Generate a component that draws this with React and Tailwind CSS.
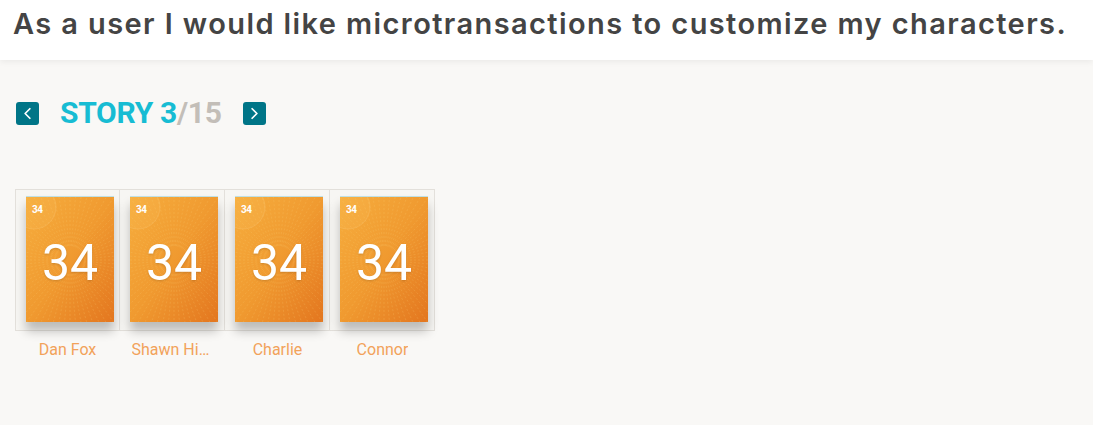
import { ChevronLeft, ChevronRight } from "lucide-react";

const players = ["Dan Fox", "Shawn Hinsey", "Charlie", "Connor"];

const rays = Array.from({ length: 72 }, (_, i) => {
  const a = (i / 72) * Math.PI * 2;
  return {
    x1: 44 + Math.cos(a) * 14,
    y1: 63 + Math.sin(a) * 14,
    x2: 44 + Math.cos(a) * 90,
    y2: 63 + Math.sin(a) * 90,
  };
});

const Card = ({ value }) => (
  <div className="relative w-[88px] h-[126px] border-t border-[#bfe0e4] bg-gradient-to-br from-[#f6ad3d] via-[#f09a30] to-[#e3761f] shadow-[0_9px_10px_rgba(0,0,0,0.24)] overflow-hidden">
    <svg className="absolute inset-0" width="88" height="126" viewBox="0 0 88 126">
      {rays.map((r, i) => (
        <line
          key={i}
          x1={r.x1}
          y1={r.y1}
          x2={r.x2}
          y2={r.y2}
          stroke="#fbd27a"
          strokeOpacity="0.25"
          strokeWidth="0.8"
          strokeDasharray="2 2"
        />
      ))}
      <circle cx="8" cy="10" r="22" fill="#ffd070" fillOpacity="0.12" stroke="#ffe0a0" strokeOpacity="0.3" strokeWidth="0.6" />
    </svg>
    <span className="absolute left-[6px] top-[8px] text-[10px] font-bold text-white leading-none tracking-[-0.5px]">
      {value}
    </span>
    <div className="absolute inset-0 flex items-center justify-center pt-[6px]">
      <span className="text-[50px] text-white leading-none drop-shadow-[0_1px_1px_rgba(0,0,0,0.15)]">
        {value}
      </span>
    </div>
  </div>
);

export default function App() {
  return (
    <div className="min-h-[425px] bg-[#f9f8f6] font-['Roboto',sans-serif]">
      <header className="h-[60px] bg-white shadow-[0_2px_6px_rgba(0,0,0,0.06)] px-[13px] flex items-center">
        <h1 className="text-[29px] font-semibold text-[#444444] font-['Inter',sans-serif] tracking-[1.4px] leading-none -mt-[14px] whitespace-nowrap">
          As a user I would like microtransactions to customize my characters.
        </h1>
      </header>

      <div className="pl-[16px] pt-[38px] flex items-center">
        <button className="w-[23px] h-[23px] rounded-[3px] bg-[#007587] flex items-center justify-center text-white">
          <ChevronLeft size={19} strokeWidth={2.2} />
        </button>
        <div className="ml-[21px] text-[30px] font-bold leading-none tracking-[-0.3px]">
          <span className="text-[#17bcd3]">STORY 3</span>
          <span className="text-[#c3beb8]">/15</span>
        </div>
        <button className="ml-[21px] w-[23px] h-[23px] rounded-[3px] bg-[#007587] flex items-center justify-center text-white">
          <ChevronRight size={19} strokeWidth={2.2} />
        </button>
      </div>

      <div className="pl-[15px] pt-[61px] flex">
        {players.map((name, i) => (
          <div key={name} className="w-[105px] flex flex-col items-center">
            <div
              className={`w-full h-[142px] border border-[#e3e0db] bg-[#f7f6f3] flex justify-start pl-[10px] pt-[6px] ${i > 0 ? "border-l-0" : ""}`}
            >
              <Card value={34} />
            </div>
            <div className="mt-[8px] max-w-[82px] text-center text-[16px] leading-[22px] text-[#f2a25a] truncate">
              {name}
            </div>
          </div>
        ))}
      </div>
    </div>
  );
}
